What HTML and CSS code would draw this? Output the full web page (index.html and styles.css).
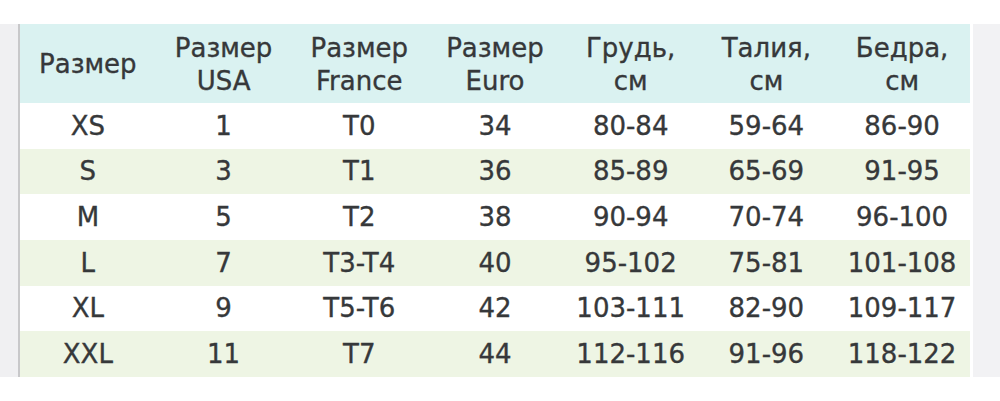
FILE: index.html
```html
<!DOCTYPE html>
<html lang="ru">
<head>
<meta charset="utf-8">
<link rel="stylesheet" href="styles.css">
</head>
<body>
<div class="page">
  <div class="side-left"></div>
  <table class="sizes">
    <thead>
      <tr>
        <th>Размер</th>
        <th>Размер<br>USA</th>
        <th>Размер<br>France</th>
        <th>Размер<br>Euro</th>
        <th>Грудь,<br>см</th>
        <th>Талия,<br>см</th>
        <th>Бедра,<br>см</th>
      </tr>
    </thead>
    <tbody>
      <tr><td>XS</td><td>1</td><td>T0</td><td>34</td><td>80-84</td><td>59-64</td><td>86-90</td></tr>
      <tr><td>S</td><td>3</td><td>T1</td><td>36</td><td>85-89</td><td>65-69</td><td>91-95</td></tr>
      <tr><td>M</td><td>5</td><td>T2</td><td>38</td><td>90-94</td><td>70-74</td><td>96-100</td></tr>
      <tr><td>L</td><td>7</td><td>T3-T4</td><td>40</td><td>95-102</td><td>75-81</td><td>101-108</td></tr>
      <tr><td>XL</td><td>9</td><td>T5-T6</td><td>42</td><td>103-111</td><td>82-90</td><td>109-117</td></tr>
      <tr><td>XXL</td><td>11</td><td>T7</td><td>44</td><td>112-116</td><td>91-96</td><td>118-122</td></tr>
    </tbody>
  </table>
  <div class="side-right"></div>
</div>
</body>
</html>
```

FILE: styles.css
```css
html, body {
  margin: 0;
  padding: 0;
  background: #ffffff;
}

.page {
  display: flex;
  align-items: stretch;
  padding-top: 24px;
  height: 353px;
}

.side-left {
  width: 18px;
  background: #f0f0f2;
  border-right: 2px solid #c8c8ca;
}

.side-right {
  flex: 1;
  margin-left: 3px;
  background: #f2f2f4;
}

.sizes {
  width: 950px;
  border-collapse: collapse;
  table-layout: fixed;
  font-family: "DejaVu Sans", Verdana, sans-serif;
  font-size: 26px;
  color: #36383a;
  -webkit-text-stroke: 0.35px #36383a;
}

.sizes th,
.sizes td {
  padding: 0;
  text-align: center;
  vertical-align: middle;
  font-weight: normal;
}

.sizes thead tr {
  height: 79px;
  background: #daf2f1;
}

.sizes th {
  line-height: 33px;
  padding-top: 2px;
}

.sizes tbody tr {
  height: 45.67px;
  background: #ffffff;
}

.sizes tbody tr:nth-child(even) {
  background: #eef5e4;
}
```
